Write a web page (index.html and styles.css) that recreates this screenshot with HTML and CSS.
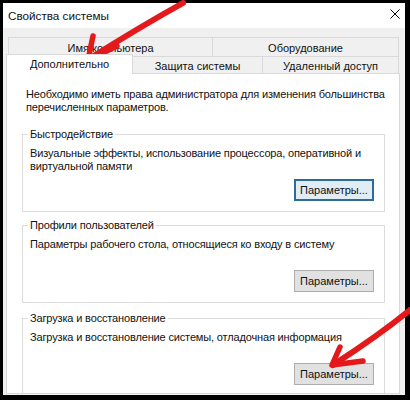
FILE: index.html
```html
<!DOCTYPE html>
<html lang="ru">
<head>
<meta charset="utf-8">
<title>Свойства системы</title>
<link rel="stylesheet" href="styles.css">
</head>
<body>
<div class="window">
  <div class="titlebar">
    <span class="title">Свойства системы</span>
    <svg class="close" viewBox="0 0 10 10"><path d="M0.5 0.5L9.5 9.5M9.5 0.5L0.5 9.5" stroke="#000" stroke-width="1" fill="none"/></svg>
  </div>
  <div class="body">
    <div class="tabs tabs-back">
      <div class="tab tab-name">Имя компьютера</div>
      <div class="tab tab-hw">Оборудование</div>
    </div>
    <div class="tabs tabs-front">
      <div class="tab tab-active">Дополнительно</div>
      <div class="tab tab-protect">Защита системы</div>
      <div class="tab tab-remote">Удаленный доступ</div>
    </div>
    <div class="panel">
      <p class="intro">Необходимо иметь права администратора для изменения большинства<br>перечисленных параметров.</p>
      <div class="group">
        <div class="group-title">Быстродействие</div>
        <div class="group-text">Визуальные эффекты, использование процессора, оперативной и<br>виртуальной памяти</div>
        <button class="btn btn-focus">Параметры...</button>
      </div>
      <div class="group">
        <div class="group-title">Профили пользователей</div>
        <div class="group-text">Параметры рабочего стола, относящиеся ко входу в систему</div>
        <button class="btn">Параметры...</button>
      </div>
      <div class="group group-last">
        <div class="group-title">Загрузка и восстановление</div>
        <div class="group-text">Загрузка и восстановление системы, отладочная информация</div>
        <button class="btn">Параметры...</button>
      </div>
    </div>
  </div>
</div>
<svg class="arrows" viewBox="0 0 410 400">
  <g fill="none" stroke="#e3191c" stroke-linecap="round" stroke-linejoin="round">
    <path d="M183 3 Q 138 28 89 59" stroke-width="6"/>
    <path d="M93 36 L88 60 L117 46" stroke-width="5.5"/>
    <path d="M410 310 Q 378 336 333 365" stroke-width="6"/>
    <path d="M340 347 L332 365 L363 361" stroke-width="5.5"/>
  </g>
</svg>
</body>
</html>
```

FILE: styles.css
```css
* { box-sizing: border-box; }
html, body { margin: 0; }
body {
  width: 410px;
  height: 400px;
  background: #000;
  overflow: hidden;
  position: relative;
  font-family: "Liberation Sans", Arial, sans-serif;
  font-size: 11px;
  letter-spacing: -0.15px;
  color: #111;
}
.window {
  margin: 3px 0 0 3px;
  width: 402px;
  height: 392px;
  background: #f0f0f0;
  display: flex;
  flex-direction: column;
}
.titlebar {
  height: 25px;
  flex: none;
  background: #fff;
  display: flex;
  align-items: center;
  justify-content: space-between;
  padding: 0 5px;
}
.title { font-size: 11.7px; letter-spacing: 0; }
.close { width: 10px; height: 10px; margin-bottom: 3px; }
.body {
  flex: 1;
  min-height: 0;
  padding: 9px 5px 1px 3px;
  display: flex;
  flex-direction: column;
}
.tabs { display: flex; flex: none; }
.tab {
  border: 1px solid #d9d9d9;
  border-bottom: none;
  border-right: none;
  background: #f0f0f0;
  display: flex;
  align-items: center;
  justify-content: center;
  white-space: nowrap;
  letter-spacing: 0;
}
.tabs-back { height: 19px; margin: 0 1px 0 2px; }
.tab-name { width: 204px; padding-top: 1px; }
.tab-hw { flex: 1; border-right: 1px solid #d9d9d9; padding-top: 1px; }
.tabs-front { height: 17px; align-items: flex-end; margin-right: 1px; }
.tab-active {
  width: 127px;
  height: 20px;
  margin-bottom: -1px;
  background: #fff;
  border-right: 1px solid #d9d9d9;
  position: relative;
  z-index: 1;
  padding-bottom: 1px;
}
.tab-protect { width: 129px; height: 17px; border-left: none; padding-top: 1px; }
.tab-remote { flex: 1; height: 17px; border-right: 1px solid #d9d9d9; padding-top: 1px; }
.panel {
  flex: 1;
  min-height: 0;
  overflow: hidden;
  background: #fff;
  border: 1px solid #d9d9d9;
  padding: 14px 14px 0 15px;
}
.intro { margin: 0 0 0 4px; line-height: 13px; white-space: nowrap; }
.group {
  border: 1px solid #dcdcdc;
  margin-top: 20px;
  padding: 0 10px 10px 7px;
}
.group + .group { margin-top: 13px; }
.group-last { margin-top: 15px; }
.group + .group-last { margin-top: 15px; }
.group-title {
  width: max-content;
  margin: -8px 0 0 -2px;
  padding: 0 2px;
  background: #fff;
  line-height: 15px;
}
.group-text { margin-top: 5px; height: 26px; line-height: 13px; white-space: nowrap; }
.btn {
  display: block;
  margin: 6px 0 0 auto;
  width: 80px;
  height: 22px;
  padding: 0;
  background: #e1e1e1;
  border: 1px solid #adadad;
  font: inherit;
  color: #111;
}
.btn-focus { border: 2px solid #2c6d96; background: #e1ecf4; }
.arrows {
  position: absolute;
  left: 0;
  top: 0;
  width: 410px;
  height: 400px;
  pointer-events: none;
}
```
